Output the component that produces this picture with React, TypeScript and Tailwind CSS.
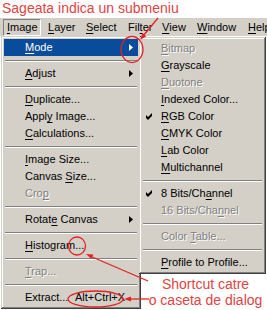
import React from 'react'

type Entry =
  | { sep: true }
  | {
      sep?: false
      label: string
      u?: number
      off?: boolean
      sub?: boolean
      on?: boolean
      check?: boolean
      shortcut?: string
    }

const imageMenu: Entry[] = [
  { label: 'Mode', u: 0, sub: true, on: true },
  { sep: true },
  { label: 'Adjust', u: 0, sub: true },
  { sep: true },
  { label: 'Duplicate...', u: 0 },
  { label: 'Apply Image...', u: 4 },
  { label: 'Calculations...', u: 0 },
  { sep: true },
  { label: 'Image Size...', u: 0 },
  { label: 'Canvas Size...', u: 7 },
  { label: 'Crop', u: 3, off: true },
  { sep: true },
  { label: 'Rotate Canvas', u: 5, sub: true },
  { sep: true },
  { label: 'Histogram...', u: 0 },
  { sep: true },
  { label: 'Trap...', u: 0, off: true },
  { sep: true },
  { label: 'Extract...', shortcut: 'Alt+Ctrl+X' },
]

const modeMenu: Entry[] = [
  { label: 'Bitmap', u: 0, off: true },
  { label: 'Grayscale', u: 0 },
  { label: 'Duotone', u: 0, off: true },
  { label: 'Indexed Color...', u: 0 },
  { label: 'RGB Color', u: 0, check: true },
  { label: 'CMYK Color', u: 0 },
  { label: 'Lab Color', u: 0 },
  { label: 'Multichannel', u: 0 },
  { sep: true },
  { label: '8 Bits/Channel', u: 9, check: true },
  { label: '16 Bits/Channel', u: 11, off: true },
  { sep: true },
  { label: 'Color Table...', u: 6, off: true },
  { sep: true },
  { label: 'Profile to Profile...', u: 0 },
]

const menuBar = [
  { label: 'Layer', u: 0, w: 'w-[38px]' },
  { label: 'Select', u: 0, w: 'w-[42px]' },
  { label: 'Filter', u: 3, w: 'w-[34px]' },
  { label: 'View', u: 0, w: 'w-[35px]' },
  { label: 'Window', u: 0, w: 'w-[51px]' },
  { label: 'Help', u: 0, w: 'w-[40px]' },
]

function Label({ text, u }: { text: string; u?: number }) {
  if (u === undefined) return <>{text}</>
  return (
    <>
      {text.slice(0, u)}
      <span className="underline decoration-1 underline-offset-[2px]">{text[u]}</span>
      {text.slice(u + 1)}
    </>
  )
}

function Check() {
  return (
    <svg width="7" height="7" viewBox="0 0 7 7">
      <path d="M0 2 L2 4 L6 0 L6 3 L2 7 L0 5 Z" fill="#000" />
    </svg>
  )
}

function Arrow({ light }: { light?: boolean }) {
  return (
    <svg width="4" height="7" viewBox="0 0 4 7">
      <polygon points="0,0 4,3.5 0,7" fill={light ? '#fff' : '#000'} />
    </svg>
  )
}

function Menu({ entries, indent }: { entries: Entry[]; indent: 'left' | 'sub' }) {
  return (
    <div className="bg-[#d4d0c8] p-[3px] shadow-[inset_-1px_-1px_0_#404040,inset_1px_1px_0_#d4d0c8,inset_-2px_-2px_0_#808080,inset_2px_2px_0_#ffffff]">
      {entries.map((e, i) => {
        if (e.sep) {
          return (
            <div key={i} className="h-[9px] pt-[4px] px-[1px]">
              <div className="h-[2px] border-t border-t-[#808080] border-b border-b-white" />
            </div>
          )
        }
        return (
          <div
            key={i}
            className={
              'flex items-center h-[17px] pr-[5px] whitespace-nowrap ' +
              (e.on ? 'bg-[#0a4c9c] text-white ' : '') +
              (e.off ? 'text-[#808080] [text-shadow:1px_1px_0_#ffffff] ' : '')
            }
          >
            {indent === 'left' ? (
              <div className="w-[21px] shrink-0" />
            ) : (
              <div className="w-[19px] shrink-0 pl-[4px] flex items-center">{e.check && <Check />}</div>
            )}
            {e.shortcut ? (
              <>
                <span className="w-[50px] shrink-0">
                  <Label text={e.label} u={e.u} />
                </span>
                <span>{e.shortcut}</span>
              </>
            ) : (
              <span>
                <Label text={e.label} u={e.u} />
              </span>
            )}
            {e.sub && (
              <span className="ml-auto flex items-center">
                <Arrow light={e.on} />
              </span>
            )}
          </div>
        )
      })}
    </div>
  )
}

export default function App() {
  return (
    <div className="relative w-[267px] h-[310px] overflow-hidden bg-white text-[11px] text-black font-['Liberation_Sans',Arial,sans-serif]">
      {/* annotation on top */}
      <div className="h-[18px] pl-[2px] text-[14px] leading-[17px] text-[#e04444] whitespace-nowrap">
        Sageata indica un submeniu
      </div>

      {/* menu bar */}
      <div className="h-[18px] bg-[#d4d0c8] pl-[3px] pt-[1px] flex items-start whitespace-nowrap">
        <div className="h-[17px] w-[38px] shrink-0 flex items-center pl-[3px] border border-t-[#808080] border-l-[#808080] border-r-white border-b-white">
          <Label text="Image" u={0} />
        </div>
        {menuBar.map((m) => (
          <div key={m.label} className={'h-[17px] shrink-0 flex items-center pl-[7px] ' + m.w}>
            <Label text={m.label} u={m.u} />
          </div>
        ))}
      </div>

      {/* dropdown + submenu */}
      <div className="flex items-start">
        <div className="ml-[1px] w-[140px] shrink-0">
          <Menu entries={imageMenu} indent="left" />
        </div>
        <div className="-ml-[2px] mt-[1px] w-[127px] shrink-0 flex flex-col">
          <Menu entries={modeMenu} indent="sub" />
          <div className="mt-[2px] pl-[6px] text-center text-[14px] leading-[16px] text-[#e04444] whitespace-nowrap">
            <div>Shortcut catre</div>
            <div>o caseta de dialog</div>
          </div>
        </div>
      </div>

      {/* red marks */}
      <svg className="absolute left-0 top-0 pointer-events-none" width="267" height="310" viewBox="0 0 267 310">
        <g stroke="#e42222" strokeWidth="1.3" fill="none">
          <line x1="158" y1="18" x2="143" y2="36" />
          <ellipse cx="132" cy="49.5" rx="11" ry="13" />
          <ellipse cx="77" cy="246" rx="8.5" ry="9" />
          <line x1="148" y1="281" x2="91" y2="256.5" />
          <ellipse cx="95.5" cy="299" rx="27.5" ry="8" />
          <line x1="149" y1="299" x2="130" y2="299" />
        </g>
        <g fill="#e42222">
          <polygon points="140,40 146.3,36.2 142.5,33" />
          <polygon points="86,254 93.4,254.5 91.4,259.1" />
          <polygon points="124,299 131,296.5 131,301.5" />
        </g>
      </svg>
    </div>
  )
}
